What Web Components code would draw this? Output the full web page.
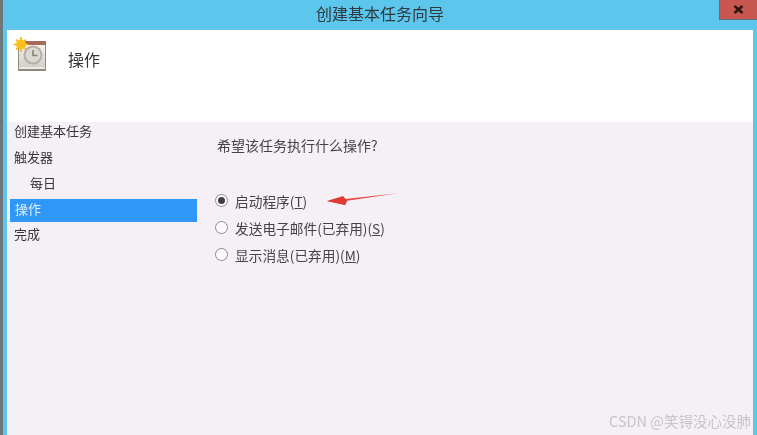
<!DOCTYPE html>
<html lang="zh"><head><meta charset="utf-8"><title>创建基本任务向导</title>
<style>
html,body{margin:0;padding:0;background:#5cc6ec}
body{font-family:"Noto Sans CJK SC","Liberation Sans",sans-serif;width:757px;height:435px;overflow:hidden}
</style></head><body>
<wizard-window>
  <span slot="title">创建基本任务向导</span>
  <span slot="heading">操作</span>
  <wizard-step slot="nav">创建基本任务</wizard-step>
  <wizard-step slot="nav">触发器</wizard-step>
  <wizard-step slot="nav" indent>每日</wizard-step>
  <wizard-step slot="nav" selected>操作</wizard-step>
  <wizard-step slot="nav">完成</wizard-step>
  <div slot="question">希望该任务执行什么操作?</div>
  <wizard-radio slot="option" checked>启动程序(<u>T</u>)</wizard-radio>
  <wizard-radio slot="option">发送电子邮件(已弃用)(<u>S</u>)</wizard-radio>
  <wizard-radio slot="option">显示消息(已弃用)(<u>M</u>)</wizard-radio>
</wizard-window>
<script>
function def(name,html){
  customElements.define(name,class extends HTMLElement{
    constructor(){super();this.attachShadow({mode:'open'}).innerHTML=html;}
  });
}
def('wizard-step',`<style>
:host{display:flex;align-items:center;box-sizing:border-box;height:26px;padding-left:4px;font-size:13px;color:#363636;white-space:nowrap}
:host([indent]){padding-left:20px}
:host([selected]){background:#2f97f6;color:#dcedfd;padding:0 0 5px 5px;height:23px;margin:4px 0 -2px}
span{filter:blur(.45px)}
</style><span><slot></slot></span>`);
def('wizard-radio',`<style>
:host{display:flex;align-items:center;gap:7px;height:27px;margin-left:-2px;font-size:13.7px;color:#444;white-space:nowrap}
.r{box-sizing:border-box;width:13px;height:13px;border:1px solid #8b8b8b;border-radius:50%;background:#fbfbfb;display:flex;align-items:center;justify-content:center;flex:none;filter:blur(.3px)}
:host([checked]) .r::after{content:"";width:7px;height:7px;border-radius:50%;background:#3f3f3f}
.t{filter:blur(.45px)}
</style><span class="r"></span><span class="t"><slot></slot></span>`);
def('clock-icon',`<style>:host{display:block;width:34px;height:34px;flex:none;filter:blur(.4px)}svg{display:block}</style>
<svg width="34" height="34" viewBox="0 0 34 34">
<defs><linearGradient id="p" x1="0" y1="0" x2="0" y2="1"><stop offset="0" stop-color="#f4f2ee"/><stop offset="1" stop-color="#cfcac4"/></linearGradient></defs>
<rect x="5" y="4" width="28" height="30" fill="#8f8880"/>
<rect x="5" y="4" width="28" height="4" fill="#a86a58"/>
<rect x="6" y="8" width="26" height="24" fill="url(#p)"/>
<rect x="6" y="30" width="26" height="2" fill="#ece9e5"/>
<circle cx="20" cy="18" r="9.5" fill="#b6ada4"/>
<circle cx="20" cy="18" r="7.5" fill="#dcd8d2"/>
<path d="M20 13v5.5h4.5" fill="none" stroke="#8a8178" stroke-width="1.6"/>
<g stroke="#f7b21a" stroke-width="1.6"><path d="M8 0v15M0.5 7.5h15M3 2.5l10 10M13 2.5l-10 10"/></g>
<circle cx="8" cy="7.5" r="5" fill="#fbc21e"/>
</svg>`);
def('wizard-window',`<style>
:host{display:block;position:relative;width:757px;height:435px;background:#5cc6ec;overflow:hidden;box-sizing:border-box;border-left:3px solid #6d777c}
.bar{display:flex;justify-content:center;align-items:center;height:30px;box-sizing:border-box;padding-bottom:5px;position:relative;font-size:16px;color:#2e3a40}
.bar span.t{filter:blur(.45px)}
.close{position:absolute;right:0;top:0;width:38px;height:20px;background:#c7574f;border:1px solid #5b6f80;border-top:0;border-right:0;box-sizing:border-box;display:flex;align-items:center;justify-content:center}
.frame{margin:0 4px;height:405px;display:flex;flex-direction:column}
.head{height:92px;background:#fff;display:flex;align-items:flex-start;padding:7px 0 0 6px;box-sizing:border-box;gap:21px}
.h{font-size:16px;color:#333;margin-top:11px;filter:blur(.45px);line-height:22px}
.body{flex:1;background:#f4f0f6;display:flex}
nav{width:187px;margin:-5px 0 0 3px;flex:none;display:block}
main{padding:12px 0 0 20px;flex:1}
.q{font-size:14px;color:#444;line-height:22px;filter:blur(.45px);margin-bottom:31px}
.mark{position:absolute;right:6px;bottom:5px;font-size:14.5px;color:#c6c3c9;line-height:18px;filter:blur(.3px)}
.arrow{position:absolute;left:320px;top:190px;filter:blur(.4px)}
</style>
<div class="bar"><span class="t"><slot name="title"></slot></span>
<div class="close"><svg width="11" height="9" viewBox="0 0 11 9"><path d="M1.5 1l8 7M9.5 1l-8 7" stroke="#2a1512" stroke-width="2.4"/></svg></div></div>
<div class="frame">
 <div class="head"><clock-icon></clock-icon><span class="h"><slot name="heading"></slot></span></div>
 <div class="body">
  <nav><slot name="nav"></slot></nav>
  <main><div class="q"><slot name="question"></slot></div><slot name="option"></slot></main>
 </div>
</div>
<svg class="arrow" width="80" height="16" viewBox="0 0 80 16"><path d="M4 11L75 3.2 24 10.8 22 15z" fill="#e5473f"/><path d="M4 11L20 6 24 10.8 22 15z" fill="#e03a35"/></svg>
<div class="mark">CSDN @笑锝没心没肺</div>`);
</script>
</body></html>
